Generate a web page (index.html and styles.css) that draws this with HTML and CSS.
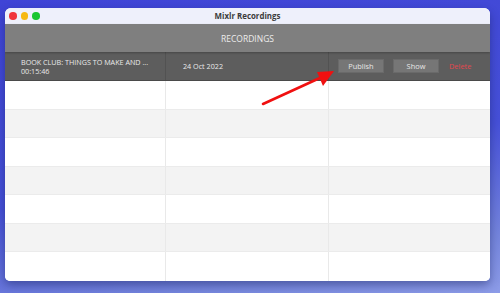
FILE: index.html
```html
<!DOCTYPE html>
<html>
<head>
<meta charset="utf-8">
<link rel="stylesheet" href="styles.css">
</head>
<body>
<div class="window">
  <div class="titlebar">
    <div class="lights">
      <span class="light red"></span>
      <span class="light yellow"></span>
      <span class="light green"></span>
    </div>
    <div class="title">Mixlr Recordings</div>
  </div>
  <div class="header">RECORDINGS</div>
  <div class="row selected">
    <div class="cell c1">
      <div class="name">BOOK CLUB: THINGS TO MAKE AND ...</div>
      <div class="dur">00:15:46</div>
    </div>
    <div class="cell c2">24 Oct 2022</div>
    <div class="cell c3">
      <button class="btn">Publish</button>
      <button class="btn">Show</button>
      <span class="delete">Delete</span>
    </div>
  </div>
  <div class="rows">
    <div class="row"><div class="cell"></div><div class="cell"></div><div class="cell"></div></div>
    <div class="row alt"><div class="cell"></div><div class="cell"></div><div class="cell"></div></div>
    <div class="row"><div class="cell"></div><div class="cell"></div><div class="cell"></div></div>
    <div class="row alt"><div class="cell"></div><div class="cell"></div><div class="cell"></div></div>
    <div class="row"><div class="cell"></div><div class="cell"></div><div class="cell"></div></div>
    <div class="row alt"><div class="cell"></div><div class="cell"></div><div class="cell"></div></div>
    <div class="row last"><div class="cell"></div><div class="cell"></div><div class="cell"></div></div>
  </div>
</div>
<svg class="arrow" width="500" height="293" viewBox="0 0 500 293">
  <line x1="263" y1="104" x2="322" y2="77" stroke="#f01010" stroke-width="2.6" stroke-linecap="round"/>
  <polygon points="334,71 317,72 323,86" fill="#f01010"/>
</svg>
</body>
</html>
```
FILE: styles.css
```css
html, body {
  margin: 0;
  padding: 0;
}
body {
  width: 500px;
  height: 293px;
  overflow: hidden;
  background: linear-gradient(170deg, #3f44d6 0%, #4650d8 55%, #7585dc 85%, #8d9ce8 100%);
  font-family: "Open Sans", "Liberation Sans", sans-serif;
  padding: 8px 10px 0 5px;
  box-sizing: border-box;
  position: relative;
}
.window {
  width: 485px;
  height: 273px;
  background: #fff;
  border-radius: 6px 6px 5px 5px;
  overflow: hidden;
  display: flex;
  flex-direction: column;
  box-shadow: 0 4px 10px rgba(20, 30, 90, 0.45);
}
.titlebar {
  height: 16px;
  background: #eef0fb;
  display: flex;
  align-items: center;
  position: relative;
  flex: none;
}
.lights {
  display: flex;
  gap: 4px;
  padding-left: 4px;
}
.light {
  width: 7.5px;
  height: 7.5px;
  border-radius: 50%;
  display: block;
}
.red { background: #f0343c; }
.yellow { background: #f6b913; }
.green { background: #1bc631; }
.title {
  position: absolute;
  left: 0;
  right: 0;
  text-align: center;
  font-size: 7.9px;
  font-weight: 700;
  color: #3c3c3c;
  top: 2.5px;
}
.header {
  height: 28px;
  flex: none;
  background: #7f7f7f;
  color: #ececec;
  font-size: 8.5px;
  display: flex;
  align-items: center;
  justify-content: center;
  box-shadow: 0 1px 2px rgba(0,0,0,0.25);
  position: relative;
  z-index: 1;
}
.row {
  display: grid;
  grid-template-columns: 161px 163px 1fr;
}
.row.selected {
  height: 29px;
  flex: none;
  background: #5d5d5d;
  border-bottom: 1px solid #4a4a4a;
  box-sizing: border-box;
  color: #eaeaea;
  font-size: 7.2px;
}
.row.selected .cell {
  border-right: 1px solid #525252;
}
.row.selected .cell:last-child { border-right: none; }
.c1 {
  padding-left: 16px;
  display: flex;
  flex-direction: column;
  justify-content: center;
  line-height: 10px;
}
.c1 .name { margin-bottom: -1px; }
.c2 {
  padding-left: 17px;
  display: flex;
  align-items: center;
}
.c3 {
  display: flex;
  align-items: center;
  padding-left: 9px;
  gap: 9px;
}
.btn {
  font-family: inherit;
  font-size: 7.4px;
  color: #e6e6e6;
  background: #767676;
  border: 1px solid #6a6a6a;
  height: 14px;
  width: 46px;
  padding: 0;
  margin: 0;
}
.delete {
  color: #e2474e;
  font-size: 7.4px;
  margin-left: 1px;
}
.rows {
  flex: 1;
  display: grid;
  grid-template-rows: repeat(7, 1fr);
}
.rows .row {
  background: #fff;
  border-bottom: 1px solid #ebebeb;
}
.rows .row.alt { background: #f3f3f3; }
.rows .row.last { border-bottom: none; }
.rows .cell {
  border-right: 1px solid #e9e9e9;
}
.rows .cell:last-child { border-right: none; }
.arrow {
  position: absolute;
  left: 0;
  top: 0;
  pointer-events: none;
}
```
